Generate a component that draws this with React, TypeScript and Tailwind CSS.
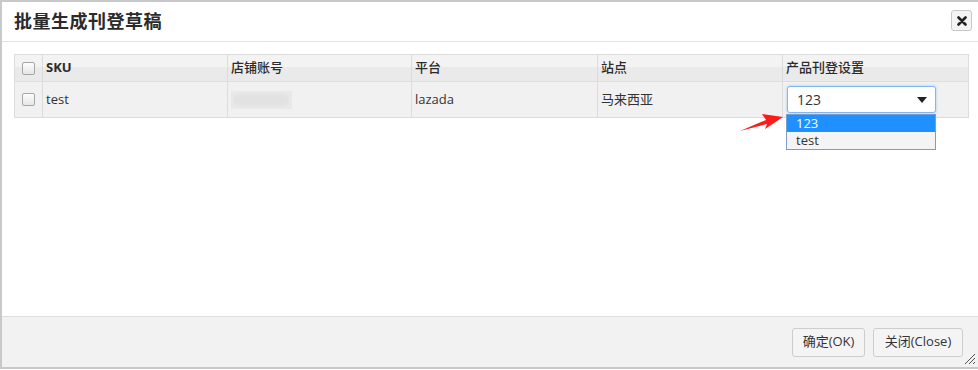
import React from "react";

const FONT = { fontFamily: '"Open Sans", "Noto Sans CJK SC", sans-serif' };

const Checkbox = () => (
  <span className="block w-[13px] h-[13px] rounded-[2px] border border-[#a6a6a6] bg-[linear-gradient(#fdfdfd,#e6e6e6)]" />
);

const cols = [
  { w: "w-[185px]", label: "SKU", bold: true },
  { w: "w-[184px]", label: "店铺账号" },
  { w: "w-[186px]", label: "平台" },
  { w: "w-[185px]", label: "站点" },
  { w: "flex-1", label: "产品刊登设置" },
];

export default function App() {
  return (
    <div className="relative w-[978px] h-[370px] bg-white overflow-hidden text-[#333]" style={FONT}>
      <div className="flex flex-col h-[369px] border-l-2 border-t-2 border-b-2 border-[#c9c9c9]">
        {/* title */}
        <div className="flex items-center justify-between h-[40px] border-b border-[#e2e2e2] pl-[12px] pr-[6px]">
          <span className="text-[18px] font-bold tracking-[0.5px] text-[#2b2b2b]">批量生成刊登草稿</span>
          <button className="flex items-center justify-center w-[21px] h-[21px] mt-[-2px] rounded-[3px] border border-[#c8c8c8] bg-[#f4f4f4]">
            <svg width="10" height="10" viewBox="0 0 10 10">
              <path d="M1.5 1.5 L8.5 8.5 M8.5 1.5 L1.5 8.5" stroke="#222" strokeWidth="2.6" strokeLinecap="round" />
            </svg>
          </button>
        </div>

        {/* body */}
        <div className="flex-1 pt-[12px] pl-[12px] pr-[9px]">
          <div className="relative border border-[#dcdcdc] text-[13px]">
            <div className="flex h-[27px] bg-[linear-gradient(#f3f3f3_45%,#eaeaea_45%)] border-b border-[#dedede] text-[#2b2b2b]">
              <div className="w-[28px] flex items-center justify-center border-r border-[#dcdcdc]">
                <Checkbox />
              </div>
              {cols.map((c, i) => (
                <div
                  key={c.label}
                  className={`${c.w} flex items-center pl-[3px] ${i < cols.length - 1 ? "border-r border-[#dcdcdc]" : ""} ${c.bold ? "font-bold" : "font-medium"}`}
                >
                  {c.label}
                </div>
              ))}
            </div>
            <div className="flex h-[35px] bg-[#f1f1f1]">
              <div className="w-[28px] flex items-center justify-center border-r border-[#dcdcdc]">
                <Checkbox />
              </div>
              <div className="w-[185px] flex items-center pl-[3px] border-r border-[#dcdcdc]">test</div>
              <div className="w-[184px] flex items-center pl-[3px] border-r border-[#dcdcdc]">
                <div className="w-[61px] h-[18px] bg-[#e9e9e9] flex items-center">
                  <div className="w-[56px] h-[12px] ml-[2px] rounded-full bg-[#e2e2e2] blur-[1px]" />
                </div>
              </div>
              <div className="w-[186px] flex items-center pl-[3px] border-r border-[#dcdcdc]">lazada</div>
              <div className="w-[185px] flex items-center pl-[3px] border-r border-[#dcdcdc]">马来西亚</div>
              <div className="flex-1 relative pl-[4px] pt-[4px]">
                <div className="flex items-center justify-between w-[149px] h-[27px] rounded-[3px] border border-[#7fb7ee] bg-white shadow-[0_0_3px_rgba(102,175,233,0.6)] pl-[9px] pr-[8px]">
                  <span className="text-[14px]">123</span>
                  <svg width="10" height="6" viewBox="0 0 10 6">
                    <path d="M0 0 L10 0 L5 6 Z" fill="#222" />
                  </svg>
                </div>
                <div className="absolute left-[3px] top-[32px] w-[150px] border border-[#7f9bcb] bg-[#f4f4f4] text-[13px] z-10">
                  <div className="h-[17px] flex items-center pl-[9px] bg-[#1e90ff] text-white">123</div>
                  <div className="h-[17px] flex items-center pl-[9px]">test</div>
                </div>
              </div>
            </div>
          </div>
        </div>

        {/* footer */}
        <div className="flex items-center justify-end gap-[8px] h-[51px] bg-[#f2f2f2] border-t border-[#dedede] pr-[15px] relative">
          <button className="h-[29px] w-[73px] rounded-[3px] border border-[#cdcdcd] bg-[#f4f4f4] text-[13px] text-[#333]">确定(OK)</button>
          <button className="h-[29px] w-[90px] rounded-[3px] border border-[#cdcdcd] bg-[#f4f4f4] text-[13px] text-[#333]">关闭(Close)</button>
          <svg className="absolute right-[2px] bottom-[2px]" width="12" height="12" viewBox="0 0 12 12">
            <path d="M11 1 L1 11 M11 5 L5 11 M11 9 L9 11" stroke="#555" strokeWidth="1" />
          </svg>
        </div>
      </div>

      {/* red arrow */}
      <svg className="absolute left-0 top-0 pointer-events-none" width="978" height="370">
        <polygon points="740,131 767,124 765,129 783,117 762,114 766,120" fill="#ff1a1a" />
      </svg>
    </div>
  );
}
